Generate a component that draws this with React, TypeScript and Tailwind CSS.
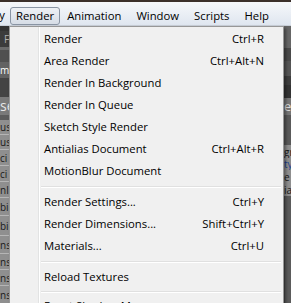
import { ReactNode } from "react";

type Props = {
    children?: ReactNode;
};

const font = "font-['Segoe_UI','Open_Sans',sans-serif]";

function MenuBarItem({ children, active }: Props & { active?: boolean }) {
    return (
        <div
            className={
                active
                    ? "h-[18px] flex items-center px-[5px] rounded-[3px] border border-[#8a95a4] bg-gradient-to-b from-[#eef1f5] to-[#d6dde6]"
                    : "h-[18px] flex items-center px-[7px] mr-px"
            }>
            {children}
        </div>
    );
}

function Item({ label, keys }: { label: string; keys?: string }) {
    return (
        <div className="h-[22px] flex items-center pl-[34px] pr-[19px] text-[11.3px] text-black whitespace-nowrap">
            <span className="flex-1">{label}</span>
            {keys && <span>{keys}</span>}
        </div>
    );
}

function Separator({ short }: { short?: boolean }) {
    return (
        <div className={(short ? "h-[7px]" : "h-[9px]") + " flex flex-col justify-center pl-[31px] pr-[2px]"}>
            <div className="h-px bg-[#e0e0e0]" />
            <div className="h-px bg-white" />
        </div>
    );
}

function Row({ children, className }: Props & { className: string }) {
    return (
        <div className={"flex items-center whitespace-nowrap overflow-hidden leading-none " + className}>
            {children}
        </div>
    );
}

export default function App() {
    return (
        <div className={"relative w-[291px] h-[303px] overflow-hidden bg-[#4e4e4e] " + font}>
            <div className="h-[2px] bg-[#3b302b]" />
            <div className="h-[24px] flex items-end bg-gradient-to-b from-[#f6f8fb] to-[#dfe6ef] border-b border-[#c9d0d9] text-[11.3px] text-black">
                <span className="w-[10px] overflow-hidden flex justify-end pr-[5px] self-center pt-[4px]">y</span>
                <MenuBarItem active>Render</MenuBarItem>
                <MenuBarItem>Animation</MenuBarItem>
                <MenuBarItem>Window</MenuBarItem>
                <MenuBarItem>Scripts</MenuBarItem>
                <MenuBarItem>Help</MenuBarItem>
            </div>

            <div className="flex">
                <div className="w-[9px] flex flex-col text-[10px]">
                    <Row className="h-[5px] bg-[#333333]" />
                    <Row className="h-[16px] bg-[#3c3c3c] text-[#b0b0b0] pl-[4px]">F</Row>
                    <Row className="h-[3px] bg-[#6b6b6b]" />
                    <Row className="h-[12px] bg-[#505050]" />
                    <Row className="h-[16px] bg-[#626262] text-white">m</Row>
                    <Row className="h-[19px] bg-[#444444]" />
                    <Row className="h-[18px] bg-[#7a7a7a] text-[#e8e8e8] text-[14px]">se</Row>
                    <Row className="h-[5px] bg-[#5c5c5c]" />
                    <Row className="h-[15px] bg-[#8f8f8f] text-[#1a1a1a] border-b border-[#b5b5b5]">us</Row>
                    <Row className="h-[15px] bg-[#8f8f8f] text-[#1a1a1a] border-b border-[#b5b5b5]">us</Row>
                    <Row className="h-[16px] bg-[#8f8f8f] text-[#1a1a1a] border-b border-[#b5b5b5]">ci</Row>
                    <Row className="h-[16px] bg-[#8f8f8f] text-[#1a1a1a] border-b border-[#b5b5b5]">ci</Row>
                    <Row className="h-[16px] bg-[#8f8f8f] text-[#1a1a1a] border-b border-[#b5b5b5]">nli</Row>
                    <Row className="h-[18px] bg-[#8f8f8f] text-[#1a1a1a] border-b border-[#b5b5b5]">bie</Row>
                    <Row className="h-[20px] bg-[#8f8f8f] text-[#1a1a1a] border-b border-[#b5b5b5]">bie</Row>
                    <Row className="h-[18px] bg-[#8f8f8f] text-[#1a1a1a] border-b border-[#b5b5b5]">ns</Row>
                    <Row className="h-[16px] bg-[#8f8f8f] text-[#1a1a1a] border-b border-[#b5b5b5]">ns</Row>
                    <Row className="h-[16px] bg-[#8f8f8f] text-[#1a1a1a] border-b border-[#b5b5b5]">ns</Row>
                    <Row className="h-[17px] bg-[#8f8f8f] text-[#1a1a1a]">ns</Row>
                </div>
                <div className="flex-1" />
                <div className="w-[8px] flex flex-col text-[10px]">
                    <Row className="h-[22px] bg-[#666666]" />
                    <Row className="h-[13px] bg-[#4a4a4a]" />
                    <Row className="h-[15px] bg-[#555555]" />
                    <Row className="h-[9px] bg-[#3e3e3e]" />
                    <Row className="h-[13px] bg-[#333333]" />
                    <Row className="h-[17px] bg-[#777777] text-[#dddddd] text-[13px] pl-[1px]">e</Row>
                    <Row className="h-[30px] bg-[#5a5a5a]" />
                    <Row className="h-[13px] bg-[#8f8f8f] text-[#1a1a1a] pl-[1px]">gr</Row>
                    <Row className="h-[12px] bg-[#8f8f8f] text-[#1c3f8f] pl-[1px]">ty</Row>
                    <Row className="h-[13px] bg-[#8f8f8f] text-[#1a1a1a] pl-[1px]">e</Row>
                    <Row className="h-[13px] bg-[#8f8f8f] text-[#1a1a1a] pl-[1px]">ia</Row>
                    <Row className="flex-1 h-[120px] bg-[#5b5b5b] border-l-2 border-[#4a4a4a]" />
                </div>
            </div>

            <div className="absolute left-[9px] top-[26px] w-[275px] h-[290px] border border-[#979797] bg-[#f0f0f0] shadow-[2px_2px_3px_rgba(0,0,0,0.4)]">
                <div className="absolute left-[28px] top-0 bottom-0 w-px bg-[#e2e3e3]" />
                <div className="absolute left-[29px] top-0 bottom-0 w-px bg-white" />
                <div className="relative pt-px">
                    <Item label="Render" keys="Ctrl+R" />
                    <Item label="Area Render" keys="Ctrl+Alt+N" />
                    <Item label="Render In Background" />
                    <Item label="Render In Queue" />
                    <Item label="Sketch Style Render" />
                    <Item label="Antialias Document" keys="Ctrl+Alt+R" />
                    <Item label="MotionBlur Document" />
                    <Separator />
                    <Item label="Render Settings..." keys="Ctrl+Y" />
                    <Item label="Render Dimensions..." keys="Shift+Ctrl+Y" />
                    <Item label="Materials..." keys="Ctrl+U" />
                    <Separator />
                    <Item label="Reload Textures" />
                    <Separator short />
                    <Item label="Reset Shadow Maps" />
                </div>
            </div>
        </div>
    );
}
